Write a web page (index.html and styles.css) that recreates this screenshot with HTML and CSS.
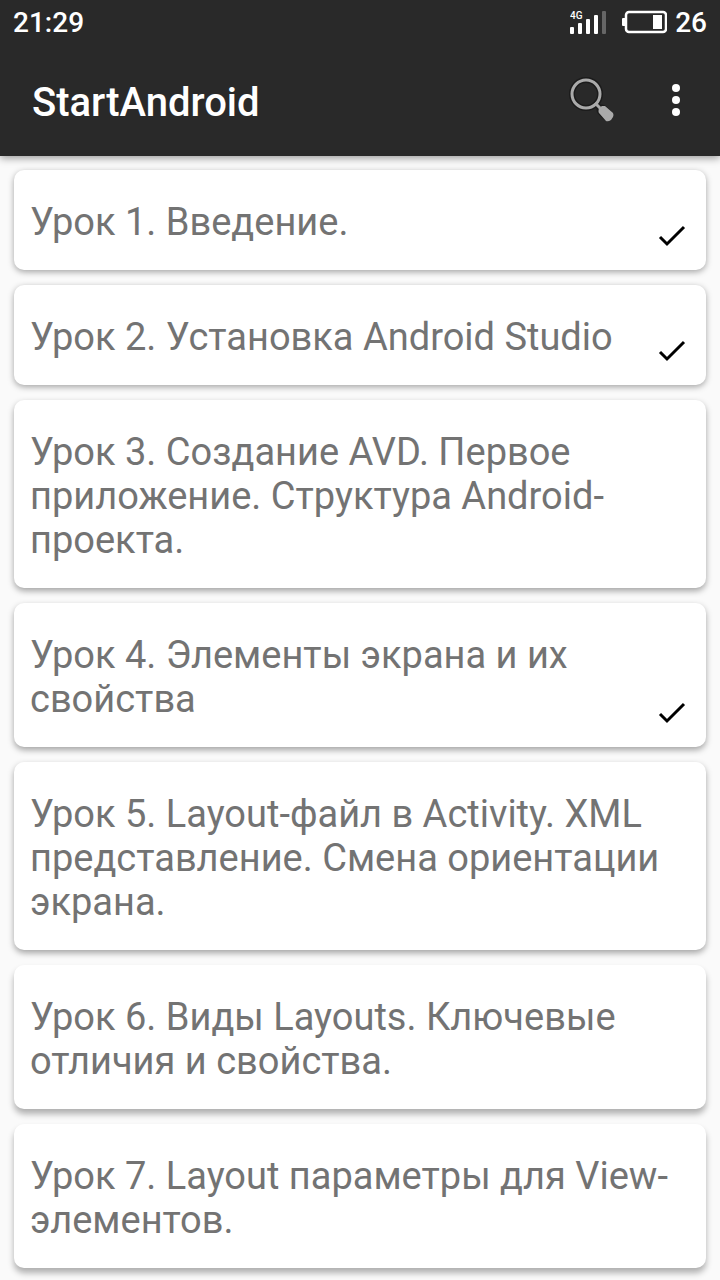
FILE: index.html
```
<!DOCTYPE html>
<html lang="ru">
  <head>
    <meta charset="utf-8">
    <meta name="viewport" content="width=device-width, initial-scale=1">
    <title>StartAndroid</title>
    <link rel="stylesheet" href="styles.css">
  </head>

  <body>
    <header class="header">
      <div class="status-bar">
        <span class="clock">21:29</span>
        <svg class="signal" width="36" height="24" viewBox="0 0 36 24">
          <text class="network" x="0" y="9">4G</text>
          <g fill="#fff">
            <rect x="0" y="17" width="4" height="7" rx="1" />
            <rect x="8" y="13" width="4" height="11" rx="1" />
            <rect x="16" y="9" width="4" height="15" rx="1" />
            <rect x="24" y="5" width="4" height="19" rx="1" />
          </g>
          <rect x="32" y="1" width="4" height="23" rx="1" fill="#666" />
        </svg>
        <svg class="battery" width="45" height="24" viewBox="0 0 45 24">
          <rect x="4" y="2" width="40" height="20" rx="3" fill="none" stroke="#fff" stroke-width="2.5" />
          <rect x="0" y="8" width="4" height="8" rx="1" fill="#fff" />
          <rect x="31" y="5" width="9" height="14" fill="#fff" />
        </svg>
        <span class="battery-level">26</span>
      </div>
      <div class="toolbar">
        <h1>StartAndroid</h1>
        <button type="button" class="icon-button" aria-label="Поиск">
          <svg width="48" height="48" viewBox="0 0 48 48">
            <g stroke="#1b1b1b" fill="none" stroke-linecap="round">
              <circle cx="18" cy="18" r="14" stroke-width="6" />
              <path d="M29 29l3 3" stroke-width="6" />
              <path d="M34 34l5 5" stroke-width="11" />
            </g>
            <circle cx="18" cy="18" r="14" fill="none" stroke="#aaa" stroke-width="3" />
            <path d="M27 27l5 5" stroke="#aaa" stroke-width="3" />
            <path d="M31 32l3-2 3 0 8 7q1 2 0 4l-2 3q-3 2-5 1l-7-8q-1-1 0-5z" fill="#aaa" />
          </svg>
        </button>
        <button type="button" class="icon-button" aria-label="Меню">
          <svg width="48" height="48" viewBox="0 0 48 48" fill="#fff">
            <circle cx="24" cy="12" r="4" />
            <circle cx="24" cy="24" r="4" />
            <circle cx="24" cy="36" r="4" />
          </svg>
        </button>
      </div>
    </header>

    <main class="lessons">
      <a href="#lesson1" class="card low">
        Урок 1. Введение.
        <svg class="check" width="28" height="22" viewBox="0 0 28 22"><path d="M2 12l7 7L26 2" /></svg>
      </a>
      <a href="#lesson2" class="card low">
        Урок 2. Установка Android Studio
        <svg class="check" width="28" height="22" viewBox="0 0 28 22"><path d="M2 12l7 7L26 2" /></svg>
      </a>
      <a href="#lesson3" class="card">
        Урок 3. Создание AVD. Первое приложение. Структура Android-проекта.
      </a>
      <a href="#lesson4" class="card">
        Урок 4. Элементы экрана и их свойства
        <svg class="check" width="28" height="22" viewBox="0 0 28 22"><path d="M2 12l7 7L26 2" /></svg>
      </a>
      <a href="#lesson5" class="card">
        Урок 5. Layout-файл в Activity. XML представление. Смена ориентации экрана.
      </a>
      <a href="#lesson6" class="card high">
        Урок 6. Виды Layouts. Ключевые отличия и свойства.
      </a>
      <a href="#lesson7" class="card high">
        Урок 7. Layout параметры для View-элементов.
      </a>
    </main>
  </body>

</html>
```

FILE: styles.css
```
body {
  margin: 0;
  font-family: Roboto, "Liberation Sans", sans-serif;
  background-color: #fafafa;
}

.header {
  position: relative;
  background-color: #292929;
  color: white;
  box-shadow: 0 2px 8px rgba(0, 0, 0, 0.4);
}

.status-bar {
  display: flex;
  align-items: center;
  height: 44px;
  padding: 0 13px;
  font-size: 28px;
  font-weight: 500;
}

.clock {
  flex: 1;
}

.network {
  font-size: 10px;
  font-weight: 500;
  fill: white;
}

.signal {
  margin-right: 16px;
}

.battery {
  margin-right: 8px;
}

.toolbar {
  display: flex;
  align-items: center;
  height: 112px;
  padding: 0 20px 0 32px;
}

h1 {
  flex: 1;
  margin: 0;
  padding-top: 4px;
  font-size: 40px;
  font-weight: 500;
}

.icon-button {
  display: flex;
  margin-left: 36px;
  padding: 0;
  border: none;
  background: none;
  cursor: pointer;
}

.lessons {
  display: flex;
  flex-direction: column;
  gap: 15px;
  padding: 14px 14px 12px;
}

.card {
  position: relative;
  padding: 30px 30px 26px 16px;
  border-radius: 10px;
  background: white;
  color: #737373;
  font-size: 38px;
  line-height: 44px;
  text-decoration: none;
  box-shadow: 0 3px 6px rgba(0, 0, 0, 0.35);
}

/* shadow grows further down the list */
.low {
  box-shadow: 0 2px 6px rgba(0, 0, 0, 0.35);
}

.high {
  box-shadow: 0 5px 6px rgba(0, 0, 0, 0.3);
}

.check {
  position: absolute;
  right: 20px;
  bottom: 23px;
  fill: none;
  stroke: black;
  stroke-width: 3;
}
```
